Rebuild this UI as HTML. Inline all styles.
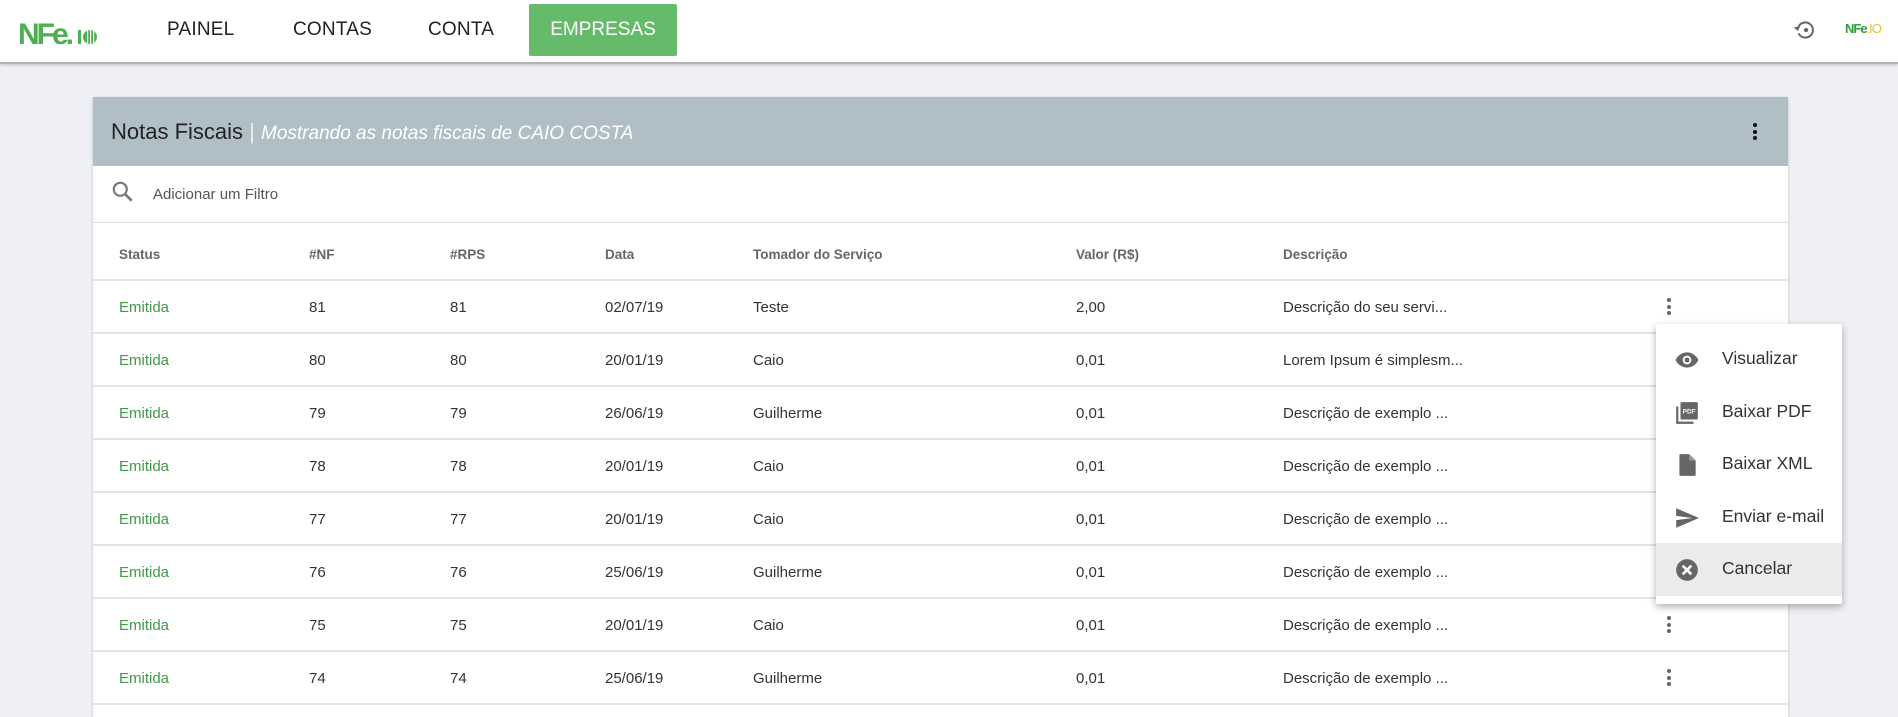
<!DOCTYPE html>
<html><head><meta charset="utf-8"><style>
*{box-sizing:border-box;margin:0;padding:0}
body{width:1898px;height:702px;overflow:hidden;background:#eff0f5;font-family:"Liberation Sans",sans-serif;color:#333;position:relative}
.nav{position:absolute;left:0;top:0;width:1898px;height:64px;background:#fff;border-bottom:2px solid #b5b5b5;box-shadow:0 1px 3px rgba(0,0,0,.2)}
.nav a{position:absolute;top:19px;font-size:19px;color:#222;letter-spacing:.2px}
.btn{position:absolute;left:529px;top:4px;width:148px;height:52px;background:#66bb6a;color:#fff;font-size:19px;text-align:center;line-height:52px;border-radius:2px}
.card{position:absolute;left:93px;top:97px;width:1695px;height:620px;background:#fff;box-shadow:0 1px 3px rgba(0,0,0,.2)}
.hdr{height:69px;background:#b0bec5;position:relative}
.hdr .t{position:absolute;left:18px;top:22px;font-size:22px;color:#222}
.hdr .t i{color:#fff;font-size:19px}
.hdr .t span{color:#eee;font-weight:300}
.filter{height:57px;border-bottom:1px solid #ddd;position:relative}
.row{position:absolute;left:0;width:1695px;height:53px;border-bottom:2px solid #e4e4e4}
.row div{position:absolute;top:18px;font-size:15px;color:#333;white-space:nowrap}
.row.h div{font-weight:bold;font-size:13.5px;color:#666;top:24px}
.row div.g{color:#3f9a4a}
.kb{position:absolute;width:4px}
.kb b{display:block;width:4px;height:4px;border-radius:2px;background:#666;margin-bottom:2.5px}
.menu{position:absolute;left:1656px;top:324px;width:186px;height:280px;background:#fff;box-shadow:0 3px 8px rgba(0,0,0,.3);border-radius:2px;padding-top:9px}
.mi{height:52.5px;position:relative;font-size:17.5px;color:#333}
.mi span{position:absolute;left:66px;top:15px}
.mi svg{position:absolute;left:18px;top:14px}
.mi.on{background:#ebebeb}
</style></head><body>
<div class="nav">
<svg style="position:absolute;left:18px;top:14px" width="86" height="34" viewBox="0 0 86 34">
<text x="0" y="30" font-family="Liberation Sans" font-weight="bold" font-size="30" fill="#4caf50" letter-spacing="-3">NFe.</text>
<rect x="60" y="16" width="3" height="14" fill="#4caf50"/><circle cx="72" cy="23" r="7" fill="#4caf50"/><rect x="69" y="16" width="1.2" height="14" fill="#fff"/><rect x="72" y="16" width="1.2" height="14" fill="#fff"/><rect x="75" y="16" width="1.2" height="14" fill="#fff"/>
</svg>
<a style="left:167px">PAINEL</a><a style="left:293px">CONTAS</a><a style="left:428px">CONTA</a>
<div class="btn">EMPRESAS</div>
<svg style="position:absolute;left:1792px;top:17px" width="26" height="26" viewBox="0 0 24 24"><path d="M6 9a7 7 0 1 1 0 6" fill="none" stroke="#666" stroke-width="1.8"/><path d="M2 9h6l-3 4z" fill="#666" transform="rotate(-10 5 11)"/><circle cx="13" cy="12" r="2" fill="#666"/></svg>
<div style="position:absolute;left:1845px;top:21px;font-size:13px;font-weight:bold;color:#2e9e3e;letter-spacing:-1px">NFe<span style="color:#e8c22a;font-weight:normal">.IO</span></div>
</div>
<div class="card">
<div class="hdr"><div class="t">Notas Fiscais <span>|</span> <i>Mostrando as notas fiscais de CAIO COSTA</i></div>
<div class="kb" style="left:1660px;top:26px"><b style="background:#111"></b><b style="background:#111"></b><b style="background:#111"></b></div></div>
<div class="filter"><svg style="position:absolute;left:17px;top:13px" width="26" height="26" viewBox="0 0 24 24"><circle cx="9.5" cy="9.5" r="6" fill="none" stroke="#777" stroke-width="2"/><path d="M14 14l6 6" stroke="#777" stroke-width="2.4"/></svg>
<div style="position:absolute;left:60px;top:20px;font-size:15px;color:#555">Adicionar um Filtro</div></div>
</div>
<div id="t" style="position:absolute;left:93px;top:223px"></div>
<div class="menu">
<div class="mi"><svg width="26" height="26" viewBox="0 0 24 24"><path d="M12 5C7 5 3 8.5 1.5 12 3 15.5 7 19 12 19s9-3.5 10.5-7C21 8.5 17 5 12 5z" fill="#666"/><circle cx="12" cy="12" r="4" fill="#fff"/><circle cx="12" cy="12" r="2.3" fill="#666"/></svg><span>Visualizar</span></div>
<div class="mi"><svg width="26" height="26" viewBox="0 0 24 24"><path d="M2 6v16h16v-2H4V6z" fill="#666"/><rect x="6" y="2" width="16" height="16" rx="1" fill="#666"/><text x="14" y="12.5" font-size="6" font-weight="bold" fill="#fff" text-anchor="middle" font-family="Liberation Sans">PDF</text></svg><span>Baixar PDF</span></div>
<div class="mi"><svg width="26" height="26" viewBox="0 0 24 24"><path d="M6 2h8l6 6v13a1 1 0 0 1-1 1H6a1 1 0 0 1-1-1V3a1 1 0 0 1 1-1z" fill="#666"/><path d="M14 2v6h6" fill="#999"/></svg><span>Baixar XML</span></div>
<div class="mi"><svg width="26" height="26" viewBox="0 0 24 24"><path d="M2 21l21-9L2 3v7l15 2-15 2z" fill="#666"/></svg><span>Enviar e-mail</span></div>
<div class="mi on"><svg width="26" height="26" viewBox="0 0 24 24"><circle cx="12" cy="12" r="10" fill="#666"/><path d="M8 8l8 8M16 8l-8 8" stroke="#fff" stroke-width="2.4"/></svg><span>Cancelar</span></div>
</div>
<script>
var cols=[26,216,357,512,660,983,1190];
var h=['Status','#NF','#RPS','Data','Tomador do Serviço','Valor (R$)','Descrição'];
var d=[[81,'02/07/19','Teste','2,00','Descrição do seu servi...'],[80,'20/01/19','Caio','0,01','Lorem Ipsum é simplesm...'],[79,'26/06/19','Guilherme','0,01','Descrição de exemplo ...'],[78,'20/01/19','Caio','0,01','Descrição de exemplo ...'],[77,'20/01/19','Caio','0,01','Descrição de exemplo ...'],[76,'25/06/19','Guilherme','0,01','Descrição de exemplo ...'],[75,'20/01/19','Caio','0,01','Descrição de exemplo ...'],[74,'25/06/19','Guilherme','0,01','Descrição de exemplo ...']];
var s='<div class="row h" style="top:0;height:58px">';h.forEach(function(x,i){s+='<div style="left:'+cols[i]+'px">'+x+'</div>'});s+='</div>';
d.forEach(function(r,k){var v=['Emitida',r[0],r[0],r[1],r[2],r[3],r[4]];s+='<div class="row" style="top:'+(58+k*53)+'px">';v.forEach(function(x,i){s+='<div'+(i==0?' class="g"':'')+' style="left:'+cols[i]+'px">'+x+'</div>'});s+='<span class="kb" style="left:1574px;top:17px"><b></b><b></b><b></b></span></div>'});
document.getElementById('t').innerHTML=s;
</script>
</body></html>
